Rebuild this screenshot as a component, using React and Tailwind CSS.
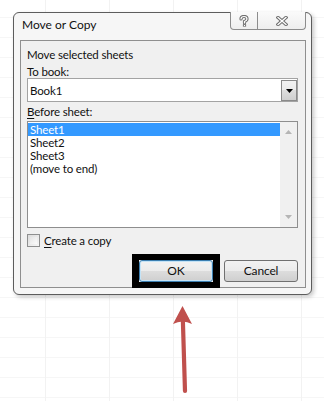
export default function App() {
  const btn =
    "h-[22px] w-[74px] rounded-[3px] border border-[#707070] bg-[linear-gradient(to_bottom,#f2f2f2_0%,#ebebeb_49%,#dddddd_50%,#cfcfcf_100%)] flex items-center justify-center leading-none";
  return (
    <div className="relative w-[324px] h-[401px] overflow-hidden bg-white bg-[linear-gradient(to_right,#f2f2f2_1px,transparent_1px),linear-gradient(to_bottom,#f6f6f6_1px,transparent_1px)] bg-[length:64px_20px] bg-[position:45px_17px] pt-[12px] pl-[13px] font-['Lato',sans-serif] text-[11.5px] tracking-[-0.15px] text-[#111]">
      <div className="w-[299px] h-[283px] rounded-[6px] border border-[#5c5c5c] bg-[#f6f6f6] shadow-[2px_2px_4px_rgba(0,0,0,0.22)] flex flex-col">
        {/* title bar */}
        <div className="h-[27px] flex items-start pl-[8px]">
          <div className="mt-[4px] h-[16px] leading-[16px] text-[12px] tracking-normal">Move or Copy</div>
          <div className="ml-auto mr-[5px] -mt-px flex h-[18px]">
            <div className="w-[28px] h-[18px] border border-[#8c8c8c] border-t-0 rounded-bl-[4px] bg-[linear-gradient(to_bottom,#fafafa,#eeeeee)] flex items-center justify-center">
              <svg width="10" height="12" viewBox="0 0 10 12">
                <path d="M2 4 Q2 1.5 5 1.5 Q8 1.5 8 4 Q8 5.5 5.5 6.5 L5.5 8" fill="none" stroke="#6e6e6e" strokeWidth="3.2" strokeLinecap="round" />
                <rect x="3.9" y="9.2" width="3.2" height="2.4" fill="#6e6e6e" />
                <path d="M2 4 Q2 1.5 5 1.5 Q8 1.5 8 4 Q8 5.5 5.5 6.5 L5.5 8" fill="none" stroke="#ffffff" strokeWidth="1.2" strokeLinecap="round" />
                <rect x="4.9" y="10" width="1.2" height="1" fill="#ffffff" />
              </svg>
            </div>
            <div className="w-[48px] h-[18px] border border-l-0 border-[#8c8c8c] border-t-0 rounded-br-[4px] bg-[linear-gradient(to_bottom,#fafafa,#eeeeee)] flex items-center justify-center">
              <svg width="12" height="10" viewBox="0 0 12 10">
                <path d="M2 1.5 L10 8.5 M10 1.5 L2 8.5" fill="none" stroke="#6e6e6e" strokeWidth="3.4" strokeLinecap="square" />
                <path d="M2 1.5 L10 8.5 M10 1.5 L2 8.5" fill="none" stroke="#ffffff" strokeWidth="1.3" strokeLinecap="square" />
              </svg>
            </div>
          </div>
        </div>
        {/* client area */}
        <div className="ml-[6px] mr-[5px] h-[248px] border border-[#8f8f8f] bg-[#f0f0f0] flex flex-col pl-[6px] pr-[7px] pt-[7px]">
          <div className="h-[14px] leading-[14px]">Move selected sheets</div>
          <div className="mt-[3px] h-[13px] leading-[13px]">
            <span className="underline underline-offset-[2px]">T</span>o book:
          </div>
          <div className="h-[24px] w-[271px] border border-[#a3a3a3] bg-white flex items-stretch pt-px">
            <div className="flex-1 pl-[2px] flex items-center leading-none">Book1</div>
            <div className="w-[16px] h-[21px] border border-[#8a8a8a] bg-[linear-gradient(to_bottom,#f2f2f2_0%,#ebebeb_49%,#dddddd_50%,#cfcfcf_100%)] flex items-center justify-center">
              <svg width="7" height="4" viewBox="0 0 7 4">
                <path d="M0 0 L7 0 L3.5 4 Z" fill="#000" />
              </svg>
            </div>
          </div>
          <div className="mt-[3px] h-[14px] leading-[14px]">
            <span className="underline underline-offset-[2px]">B</span>efore sheet:
          </div>
          <div className="mt-[2px] h-[107px] w-[271px] border border-[#8e8e8e] bg-white flex">
            <div className="flex-1 pt-px">
              <div className="h-[13px] leading-[13px] bg-[#3399ff] text-white pl-[2px]">Sheet1</div>
              <div className="h-[13px] leading-[13px] pl-[2px]">Sheet2</div>
              <div className="h-[13px] leading-[13px] pl-[2px]">Sheet3</div>
              <div className="h-[13px] leading-[13px] pl-[2px]">(move to end)</div>
            </div>
            <div className="w-[17px] bg-[#f0f0f0] flex flex-col justify-between items-center py-[8px]">
              <svg width="7" height="4" viewBox="0 0 7 4">
                <path d="M0 4 L7 4 L3.5 0 Z" fill="#b5b5b5" />
              </svg>
              <svg width="7" height="4" viewBox="0 0 7 4">
                <path d="M0 0 L7 0 L3.5 4 Z" fill="#b5b5b5" />
              </svg>
            </div>
          </div>
          <div className="mt-[6px] h-[13px] flex items-center gap-[4px]">
            <div className="w-[13px] h-[13px] border border-[#8e8f8f] bg-[linear-gradient(135deg,#dcdcdc,#f6f6f6)] p-[2px]">
              <div className="w-full h-full bg-[linear-gradient(135deg,#e4e4e4,#fbfbfb)]" />
            </div>
            <div className="leading-[13px]">
              <span className="underline underline-offset-[2px]">C</span>reate a copy
            </div>
          </div>
          <div className="mt-[7px] h-[33px] flex items-center justify-end gap-[4px]">
            <div className="border-x-[7px] border-y-[6px] border-black">
              <div className={btn.replace("border-[#707070]", "border-[#3c7fb1]") + " w-[73px] shadow-[inset_0_0_0_1px_#c4e3f6] text-[12px]"}>OK</div>
            </div>
            <div className={btn + " text-[12px]"}>Cancel</div>
          </div>
        </div>
      </div>
      <svg className="block -ml-[13px]" width="324" height="106" viewBox="0 295 324 106">
        <path d="M182.5 306 L173 324 Q182.5 319 192 324 Z" fill="#c0504d" />
        <path d="M182.8 318 L185 391" stroke="#c0504d" strokeWidth="4.2" strokeLinecap="round" fill="none" />
      </svg>
    </div>
  );
}
